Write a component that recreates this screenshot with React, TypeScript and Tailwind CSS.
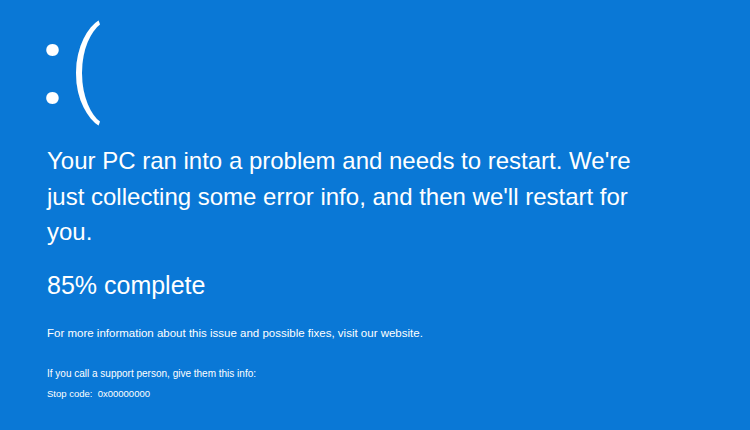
export default function App() {
  return (
    <div className="w-[750px] h-[430px] overflow-hidden bg-[#0a78d6] text-white font-['Liberation_Sans',Arial,sans-serif]">
      <div className="pl-[47px]">
        {/* sad face */}
        <div className="-ml-[8px] flex items-start font-['Roboto','Liberation_Sans',sans-serif]">
          <span className="text-[111px] leading-[130px] font-normal">:</span>
          <span className="ml-[3px] mt-[8px] text-[102px] leading-[118px] font-light">(</span>
        </div>
        <p className="mt-[13px] text-[24px] leading-[35.5px] w-[600px]">
          Your PC ran into a problem and needs to restart. We're just collecting some error info, and then we'll restart for you.
        </p>
        <p className="mt-[20px] text-[25px] leading-[30px]">85% complete</p>
        <p className="mt-[26px] text-[11.5px] leading-[14px]">
          For more information about this issue and possible fixes, visit our website.
        </p>
        <p className="mt-[28px] text-[10px] leading-[12px]">If you call a support person, give them this info:</p>
        <p className="mt-[8px] text-[9.5px] leading-[12px] whitespace-pre">Stop code:  0x00000000</p>
      </div>
    </div>
  );
}
